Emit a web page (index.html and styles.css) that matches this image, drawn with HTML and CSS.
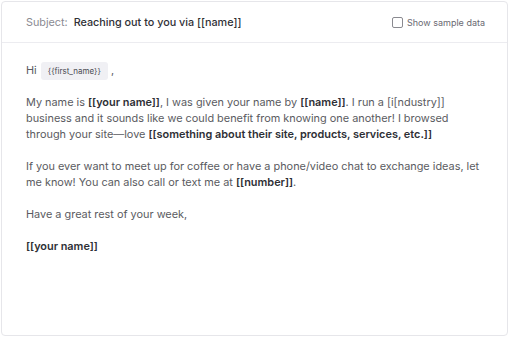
FILE: index.html
```html
<!DOCTYPE html>
<html lang="en">
<head>
    <meta charset="UTF-8">
    <title>Email preview</title>
    <link rel="stylesheet" href="styles.css">
</head>
<body>
    <div class="email-card">
        <div class="email-header">
            <div class="subject">
                <span class="subject-label">Subject:</span>
                <span class="subject-text">Reaching out to you via [[name]]</span>
            </div>
            <label class="sample-toggle">
                <span class="fake-check"></span>
                Show sample data
            </label>
        </div>

        <div class="email-body">
            <p>Hi <span class="token">{{first_name}}</span> ,</p>
            <p>My name is <b>[[your name]]</b>, I was given your name by <b>[[name]]</b>. I run a [i[ndustry]] business and it sounds like we could benefit from knowing one another! I browsed through your site—love <b>[[something about their site, products, services, etc.]]</b></p>
            <p>If you ever want to meet up for coffee or have a phone/video chat to exchange ideas, let me know! You can also call or text me at <b>[[number]]</b>.</p>
            <p>Have a great rest of your week,</p>
            <p><b>[[your name]]</b></p>
        </div>
    </div>
</body>
</html>
```

FILE: styles.css
```css
body {
    margin: 0;
    padding: 1px 4px 4px 1px;
    background-color: #ffffff;
    font-family: Inter, "Noto Sans", sans-serif;
}

.email-card {
    height: 335px;
    border: 1px solid #e6e6ea;
    border-radius: 4px;
    box-sizing: border-box;
}

.email-header {
    display: flex;
    justify-content: space-between;
    align-items: center;
    height: 40px;
    padding: 0 22px 0 24px;
    border-bottom: 1px solid #ececf0;
}

.subject {
    display: flex;
    align-items: center;
    gap: 6px;
    font-size: 10.8px;
}

.subject-label {
    color: #8a8a92;
}

.subject-text {
    color: #2f3036;
    font-weight: 500;
}

.sample-toggle {
    display: flex;
    align-items: center;
    gap: 4px;
    font-size: 9px;
    color: #6a6a72;
}

.fake-check {
    width: 9px;
    height: 9px;
    border: 1px solid #8a8a90;
    border-radius: 2px;
}

.email-body {
    padding: 18px 24px 0 24px;
    font-size: 10.9px;
    line-height: 16px;
    color: #5a5b61;
}

.email-body p {
    margin: 0 0 16px;
}

.email-body p:first-child {
    margin-bottom: 14px;
    line-height: 18px;
}

.email-body b {
    font-weight: 600;
    color: #2e2f35;
}

.token {
    display: inline-block;
    padding: 0 7px;
    margin-left: 1px;
    line-height: 18px;
    font-size: 8px;
    color: #4a4b52;
    background-color: #f0f0f4;
    border-radius: 3px;
}
```
